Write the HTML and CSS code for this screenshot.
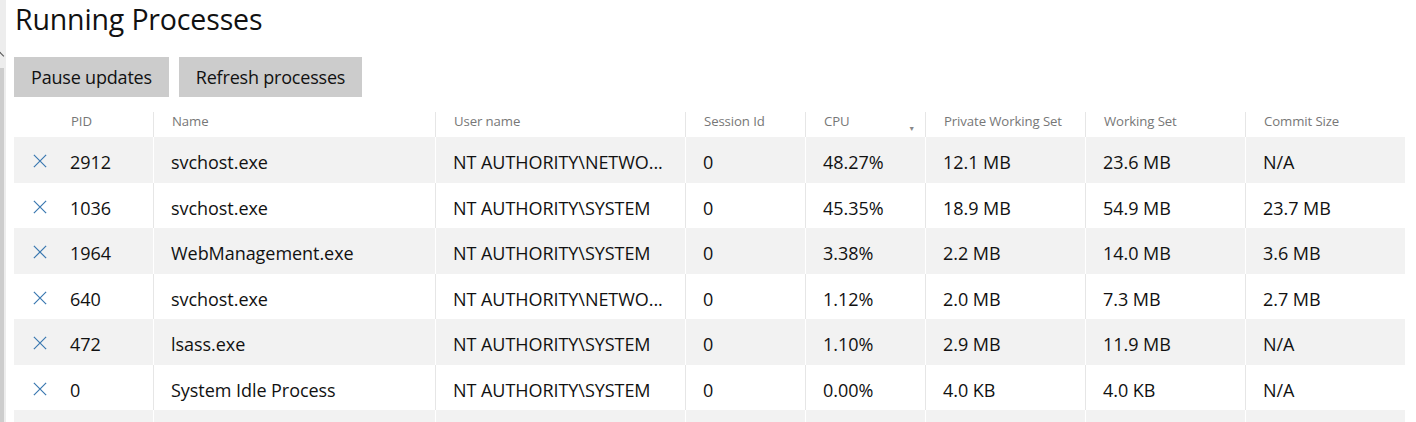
FILE: index.html
```html
<!DOCTYPE html>
<html>
<head>
<meta charset="utf-8">
<link rel="stylesheet" href="styles.css">
</head>
<body>
<div class="scrollbar"><span class="caret"></span><span class="thumb"></span></div>
<main class="page">
  <h1 class="title">Running Processes</h1>
  <div class="actions">
    <button class="btn">Pause updates</button>
    <button class="btn">Refresh processes</button>
  </div>
  <div class="table">
    <div class="row head">
      <div class="cell first"><span class="hpid">PID</span></div>
      <div class="cell">Name</div>
      <div class="cell">User name</div>
      <div class="cell">Session Id</div>
      <div class="cell sorted">CPU<span class="sort">▼</span></div>
      <div class="cell">Private Working Set</div>
      <div class="cell">Working Set</div>
      <div class="cell">Commit Size</div>
    </div>
    <div class="row alt">
      <div class="cell first"><svg class="x" viewBox="0 0 16 16"><path d="M1 1L15 15M15 1L1 15"/></svg><span class="pid">2912</span></div>
      <div class="cell">svchost.exe</div>
      <div class="cell">NT AUTHORITY\NETWO...</div>
      <div class="cell">0</div>
      <div class="cell">48.27%</div>
      <div class="cell">12.1 MB</div>
      <div class="cell">23.6 MB</div>
      <div class="cell">N/A</div>
    </div>
    <div class="row">
      <div class="cell first"><svg class="x" viewBox="0 0 16 16"><path d="M1 1L15 15M15 1L1 15"/></svg><span class="pid">1036</span></div>
      <div class="cell">svchost.exe</div>
      <div class="cell">NT AUTHORITY\SYSTEM</div>
      <div class="cell">0</div>
      <div class="cell">45.35%</div>
      <div class="cell">18.9 MB</div>
      <div class="cell">54.9 MB</div>
      <div class="cell">23.7 MB</div>
    </div>
    <div class="row alt">
      <div class="cell first"><svg class="x" viewBox="0 0 16 16"><path d="M1 1L15 15M15 1L1 15"/></svg><span class="pid">1964</span></div>
      <div class="cell">WebManagement.exe</div>
      <div class="cell">NT AUTHORITY\SYSTEM</div>
      <div class="cell">0</div>
      <div class="cell">3.38%</div>
      <div class="cell">2.2 MB</div>
      <div class="cell">14.0 MB</div>
      <div class="cell">3.6 MB</div>
    </div>
    <div class="row">
      <div class="cell first"><svg class="x" viewBox="0 0 16 16"><path d="M1 1L15 15M15 1L1 15"/></svg><span class="pid">640</span></div>
      <div class="cell">svchost.exe</div>
      <div class="cell">NT AUTHORITY\NETWO...</div>
      <div class="cell">0</div>
      <div class="cell">1.12%</div>
      <div class="cell">2.0 MB</div>
      <div class="cell">7.3 MB</div>
      <div class="cell">2.7 MB</div>
    </div>
    <div class="row alt">
      <div class="cell first"><svg class="x" viewBox="0 0 16 16"><path d="M1 1L15 15M15 1L1 15"/></svg><span class="pid">472</span></div>
      <div class="cell">lsass.exe</div>
      <div class="cell">NT AUTHORITY\SYSTEM</div>
      <div class="cell">0</div>
      <div class="cell">1.10%</div>
      <div class="cell">2.9 MB</div>
      <div class="cell">11.9 MB</div>
      <div class="cell">N/A</div>
    </div>
    <div class="row">
      <div class="cell first"><svg class="x" viewBox="0 0 16 16"><path d="M1 1L15 15M15 1L1 15"/></svg><span class="pid">0</span></div>
      <div class="cell">System Idle Process</div>
      <div class="cell">NT AUTHORITY\SYSTEM</div>
      <div class="cell">0</div>
      <div class="cell">0.00%</div>
      <div class="cell">4.0 KB</div>
      <div class="cell">4.0 KB</div>
      <div class="cell">N/A</div>
    </div>
    <div class="row alt last">
      <div class="cell first"></div>
      <div class="cell"></div>
      <div class="cell"></div>
      <div class="cell"></div>
      <div class="cell"></div>
      <div class="cell"></div>
      <div class="cell"></div>
      <div class="cell"></div>
    </div>
  </div>
</main>
</body>
</html>
```
FILE: styles.css
```css
html, body {
  margin: 0;
  padding: 0;
  background: #ffffff;
  overflow: hidden;
}
body {
  font-family: "Open Sans", "Noto Sans", "Liberation Sans", sans-serif;
  color: #000;
  width: 1416px;
  height: 422px;
  position: relative;
}
.scrollbar {
  position: absolute;
  left: 0;
  top: 0;
  width: 6px;
  height: 422px;
  background: #ededed;
}
.scrollbar .caret {
  position: absolute;
  left: -3px;
  top: 53px;
  width: 5px;
  height: 5px;
  border-left: 1.5px solid #555;
  border-top: 1.5px solid #555;
  transform: rotate(45deg);
}
.scrollbar .thumb {
  position: absolute;
  left: 0;
  top: 68px;
  width: 4px;
  bottom: 0;
  background: #cdcdcd;
}
.page {
  padding: 0 0 0 14px;
  height: 422px;
  overflow: hidden;
}
.title {
  margin: 0;
  height: 57px;
  padding-left: 1px;
  font-weight: 400;
  font-size: 28.5px;
  line-height: 38px;
  letter-spacing: -0.15px;
  color: #111;
}
.actions {
  display: flex;
  gap: 10px;
  height: 40px;
}
.btn {
  border: 0;
  margin: 0;
  background: #cccccc;
  height: 40px;
  padding: 0;
  font-family: inherit;
  font-size: 18px;
  letter-spacing: -0.2px;
  color: #111;
}
.btn:first-child { width: 155px; }
.btn:last-child { width: 183px; }
.table {
  margin-top: 8px;
  width: 1391px;
}
.row {
  display: grid;
  grid-template-columns: 139px 282px 250px 120px 120px 160px 160px 160px;
  height: 45.5px;
  align-items: stretch;
}
.row.head {
  height: 32px;
}
.cell {
  display: flex;
  align-items: center;
  padding-left: 17px;
  padding-top: 5px;
  border-left: 1px solid #e6e6e6;
  font-size: 18px;
  letter-spacing: -0.05px;
  color: #111;
  white-space: nowrap;
  overflow: hidden;
}
.row.alt {
  background: #f2f2f2;
}
.row.alt .cell {
  border-left-color: #ffffff;
}
.cell.first {
  border-left: 0;
  padding-left: 19px;
}
.head .cell {
  font-size: 13.2px;
  color: #777;
  letter-spacing: -0.1px;
  margin-top: 7px;
  padding-top: 0;
  padding-bottom: 7px;
  padding-left: 18px;
}
.head .cell.first {
  padding-left: 57px;
}
.x {
  width: 14px;
  height: 14px;
  margin-right: 23px;
  margin-top: -2px;
  fill: none;
  stroke: #3a78b0;
  stroke-width: 1.4;
}
.cell.sorted {
  position: relative;
}
.sort {
  position: absolute;
  right: 10px;
  top: 12px;
  font-size: 7px;
  color: #888;
}
```
